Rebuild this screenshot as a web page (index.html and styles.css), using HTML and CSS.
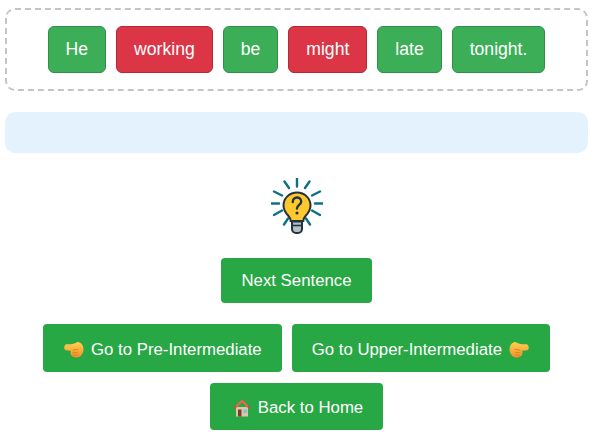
FILE: index.html
```html
<!DOCTYPE html>
<html lang="en">
<head>
  <meta charset="UTF-8" />
  <meta name="viewport" content="width=device-width, initial-scale=1" />
  <title>Sentence Order</title>
  <link rel="stylesheet" href="styles.css">
</head>
<body>
  <!-- shared pointing hand, flipped for the right one -->
  <svg class="defs" aria-hidden="true">
    <defs>
      <linearGradient id="skin" x1="0" y1="0" x2="0" y2="1">
        <stop offset="0" stop-color="#fdd04f" />
        <stop offset="1" stop-color="#f3902c" />
      </linearGradient>
      <symbol id="hand" viewBox="0 0 22 18">
        <path d="M3.500 3.200c3 .2 6 .2 8-.6 1.500-1.200 3-1.800 4.500-1.400 2.800.8 4.500 3.600 4.500 7 0 4.400-3 8.300-6.800 8.300-2.800 0-4.700-1-5.700-2.800-.6-1.200-.6-2.500-.1-4-2 .1-3.800 0-5-.4-1.100-.4-1.700-1.400-1.700-2.600 0-1.600 1-3.500 2.300-3.500z" fill="url(#skin)" />
        <path d="M10 9.500c1.400-1 3.200-1.200 5-1M9.500 12.200c1.500-.7 3.200-1 4.800-.8M10.500 14.500c1.200-.5 2.400-.7 3.600-.6" fill="none" stroke="#e07f1f" stroke-width="1" stroke-linecap="round" />
      </symbol>
    </defs>
  </svg>

  <div class="container">
    <div class="word-box">
      <div class="word correct">He</div>
      <div class="word wrong">working</div>
      <div class="word correct">be</div>
      <div class="word wrong">might</div>
      <div class="word correct">late</div>
      <div class="word correct">tonight.</div>
    </div>

    <div class="feedback"></div>

    <div class="hint">
      <svg class="bulb" viewBox="0 0 52 56" aria-hidden="true">
        <path d="M26 .500v8M13.500 3.500l4.500 6.500M38.500 3.500L34 10M3 13.500l8 4M49 13.500l-8 4M.500 25.500h7.500M44 25.500h7.500M3 37l8-4.500M49 37l-8-4.500M13 46.500l4-6M39 46.500l-4-6" fill="none" stroke="#0d7086" stroke-width="2.400" stroke-linecap="round" />
        <path d="M26 14.500c-7.800 0-13.500 6-13.500 13 0 4.600 2.300 7.600 4.800 10.300 1.400 1.500 2.200 3 2.400 5.200h12.600c.2-2.200 1-3.700 2.400-5.200 2.500-2.700 4.800-5.700 4.800-10.300 0-7-5.700-13-13.500-13z" fill="#fdc92f" stroke="#24323f" stroke-width="2" />
        <path d="M21 43.500h10v7.500c0 2.300-1.800 4-4 4h-2c-2.200 0-4-1.700-4-4z" fill="#b4bfc5" stroke="#24323f" stroke-width="2" />
        <path d="M21 47.500h10" stroke="#24323f" stroke-width="1.600" />
        <path d="M21.800 24c0-2.800 1.900-4.500 4.200-4.500s4.200 1.700 4.200 4c0 3.400-4.200 3.500-4.200 7" fill="none" stroke="#24323f" stroke-width="2.400" stroke-linecap="round" />
        <circle cx="26" cy="35" r="1.600" fill="#24323f" />
      </svg>
    </div>

    <div class="actions">
      <a class="btn next" href="#">Next Sentence</a>
    </div>
    <div class="actions nav">
      <a class="btn tall" href="#">
        <svg class="emoji" viewBox="0 0 22 18" aria-hidden="true"><use href="#hand" /></svg>
        Go to Pre-Intermediate
      </a>
      <a class="btn tall" href="#">
        Go to Upper-Intermediate
        <svg class="emoji flip" viewBox="0 0 22 18" aria-hidden="true"><use href="#hand" /></svg>
      </a>
      <a class="btn home" href="#">
        <svg class="emoji" viewBox="-1 0 22 18" aria-hidden="true">
          <path d="M5 8h12v9.500H5z" fill="#dcc8a8" />
          <path d="M11 .500L2 9l1.300 1.200L11 3.500l7.700 6.700L20 9z" fill="#c9503a" />
          <path d="M11 .500L5 6.200V9l6-5.500L17 9V6.200z" fill="#e56a4c" />
          <path d="M7 10.500h3.500v7H7z" fill="#7a3f2c" />
          <path d="M12.500 10.500H16V14h-3.500z" fill="#7cc0e8" />
        </svg>
        Back to Home
      </a>
    </div>
  </div>
</body>
</html>
```

FILE: styles.css
```css
body, html {
  margin: 0;
  padding: 0;
  background: #fff;
  font-family: "Liberation Sans", Arial, sans-serif;
  color: #fff;
}

.defs {
  display: block;
  width: 0;
  height: 0;
}

.container {
  padding: 8px 8px 0 5px;
  text-align: center;
}

.word-box {
  display: flex;
  justify-content: center;
  gap: 10px;
  height: 83px;
  box-sizing: border-box;
  padding-top: 16px;
  border: 2px dashed #c4c4c4;
  border-radius: 10px;
}

.word {
  box-sizing: border-box;
  height: 47px;
  line-height: 45px;
  padding: 0 17px;
  font-size: 17.6px;
  border: 1px solid;
  border-radius: 6px;
}

.correct {
  background: #3cae58;
  border-color: #2f8f48;
}

.wrong {
  background: #dc3545;
  border-color: #b02a37;
}

.feedback {
  height: 41px;
  margin-top: 21px;
  background: #e3f2fd;
  border-radius: 10px;
}

.hint {
  margin-top: 25px;
  height: 56px;
}

.bulb {
  display: block;
  width: 52px;
  height: 56px;
  margin: 0 auto;
}

.actions {
  display: flex;
  justify-content: center;
  margin-top: 24px;
}

.nav {
  flex-wrap: wrap;
  gap: 11px 10px;
  margin-top: 21px;
}

.btn {
  display: flex;
  align-items: center;
  gap: 6px;
  box-sizing: border-box;
  height: 47px;
  padding: 0 20px;
  background: #28a745;
  border-radius: 4px;
  color: #fff;
  font-size: 16.8px;
  text-decoration: none;
}

.next {
  height: 45px;
}

.tall {
  height: 48px;
  padding-top: 3px;
}

.home {
  padding-top: 2px;
}

.emoji {
  width: 22px;
  height: 18px;
  flex: none;
}

.flip {
  transform: scaleX(-1);
}
```
